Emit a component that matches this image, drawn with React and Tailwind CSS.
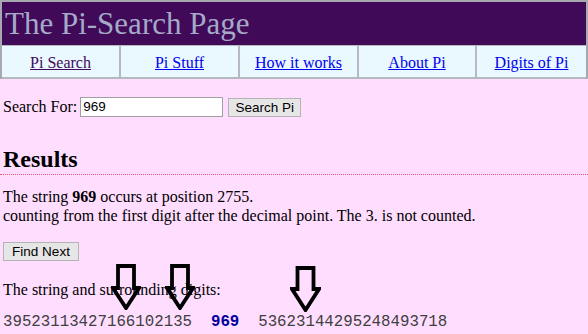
import React from "react";

function Arrow({ left, top, w, h, shaftW, headH }) {
  const cx = w / 2;
  const sx1 = cx - shaftW / 2;
  const sx2 = cx + shaftW / 2;
  const hy = h - headH;
  const d = `M${sx1} 2 L${sx2} 2 L${sx2} ${hy} L${w - 2} ${hy} L${cx} ${h - 2} L2 ${hy} L${sx1} ${hy} Z`;
  return (
    <svg
      className="absolute"
      style={{ left, top }}
      width={w}
      height={h}
      viewBox={`0 0 ${w} ${h}`}
    >
      <path d={d} fill="none" stroke="#000" strokeWidth="3.8" strokeLinejoin="miter" />
    </svg>
  );
}

export default function App() {
  return (
    <div className="relative min-h-[334px] bg-[#ffddff] font-['Liberation_Serif',serif] text-[16px] text-black">
      <div className="border-t-2 border-x-2 border-[#a8a8b0]">
        <div className="h-[43px] bg-[#400a58] pl-[3px] text-[31px] leading-[43px] text-[#a4aac8]">
          The Pi-Search Page
        </div>
        <div className="grid grid-cols-[119px_119px_119px_118px_1fr] h-[34px] bg-[#eaf8ff] border-t border-b-2 border-[#b8b8c0]">
          {[
            ["Pi Search", "text-[#400a58]"],
            ["Pi Stuff", "text-[#0000ee]"],
            ["How it works", "text-[#0000ee]"],
            ["About Pi", "text-[#0000ee]"],
            ["Digits of Pi", "text-[#0000ee]"],
          ].map(([t, c], i) => (
            <div
              key={t}
              className={`flex items-center justify-center pt-[2px] ${i < 4 ? "border-r-2 border-[#b8b8c0]" : ""}`}
            >
              <a href="#" className={`underline ${c}`}>
                {t}
              </a>
            </div>
          ))}
        </div>
      </div>

      <div className="pl-[3px]">
        <div className="mt-[17px] flex items-center h-[22px]">
          <span>Search For:</span>
          <input
            defaultValue="969"
            className="ml-[3px] w-[143px] h-[20px] border border-[#a0a0a0] bg-white px-[2px] font-['Liberation_Sans',sans-serif] text-[13.5px] outline-none"
          />
          <button className="ml-[5px] w-[73px] h-[19px] border border-[#b4b4b4] bg-[#e6e6e6] font-['Liberation_Sans',sans-serif] text-[13.5px] leading-[17px]">
            Search Pi
          </button>
        </div>

        <h2 className="mt-[28px] text-[24px] font-bold leading-[27px]">Results</h2>
      </div>
      <div className="mt-[1px] border-t border-dotted border-[#e85870]" />

      <div className="pl-[3px]">
        <p className="mt-[12px] leading-[19px]">
          The string <b>969</b> occurs at position 2755.
          <br />
          counting from the first digit after the decimal point. The 3. is not counted.
        </p>
        <button className="mt-[17px] w-[76px] h-[19px] border border-[#b4b4b4] bg-[#e6e6e6] font-['Liberation_Sans',sans-serif] text-[13.5px] leading-[17px]">
          Find Next
        </button>
        <p className="mt-[17px] leading-[19px]">The string and surrounding digits:</p>
        <div className="mt-[14px] whitespace-pre font-['Liberation_Mono',monospace] text-[15.75px] leading-[18px] text-[#404040]">
          {"39523113427166102135  "}
          <b className="text-[#0000a0]">969</b>
          {"  53623144295248493718"}
        </div>
      </div>

      <Arrow left={111} top={264} w={30} h={46} shaftW={16} headH={22} />
      <Arrow left={165} top={264} w={30} h={46} shaftW={16} headH={22} />
      <Arrow left={290} top={266} w={31} h={46} shaftW={16} headH={23} />
    </div>
  );
}
